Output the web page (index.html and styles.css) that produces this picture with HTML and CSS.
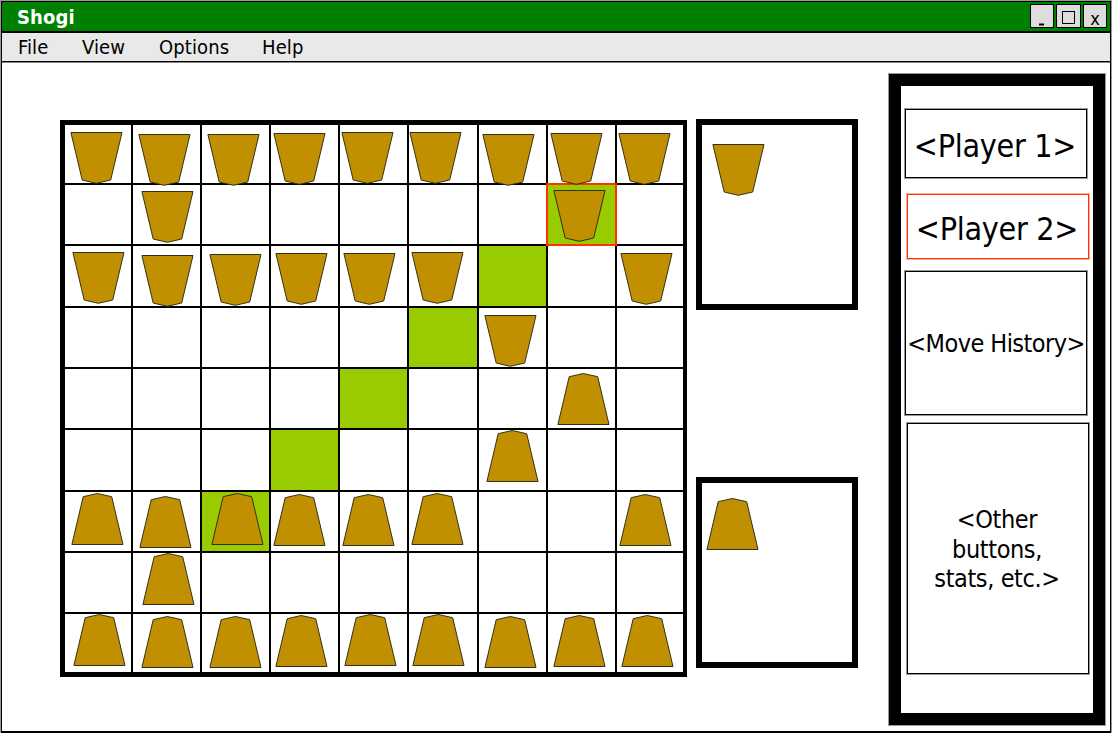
FILE: index.html
```
<!DOCTYPE html>
<html lang="en">
<head>
<meta charset="utf-8">
<title>Shogi</title>
<link rel="stylesheet" href="styles.css">
</head>
<body>
<div class="window">
  <header class="titlebar">
    <h1 class="title">Shogi</h1>
    <div class="controls">
      <button class="control"><svg width="22" height="22"><path d="M8 19.5h5" stroke="#000" stroke-width="2"/></svg></button>
      <button class="control wide"><svg width="23" height="22"><rect x="5.5" y="6.5" width="12" height="12" fill="none" stroke="#000"/></svg></button>
      <button class="control"><span class="close">x</span></button>
    </div>
  </header>
  <nav class="menu"><span>File</span><span>View</span><span>Options</span><span>Help</span></nav>
  <main class="content">
    <section class="board" id="board"></section>
    <section class="trays">
      <div class="tray gote-tray" id="tray-top"></div>
      <div class="tray sente-tray" id="tray-bottom"></div>
    </section>
    <aside class="sidebar">
      <div class="box player1">&lt;Player 1&gt;</div>
      <div class="box player2 shifted active">&lt;Player 2&gt;</div>
      <div class="box history">&lt;Move History&gt;</div>
      <div class="box other shifted">&lt;Other<br>buttons,<br>stats, etc.&gt;</div>
    </aside>
  </main>
</div>
<script src="board.js"></script>
</body>
</html>
```

FILE: board.js
```
// Each entry: row, column, facing, left inset, top inset within its square.
const pieces = [
  [0,0,'down',5,7],[0,1,'down',5,9],[0,2,'down',5,9],[0,3,'down',2,8],[0,4,'down',1,7],
  [0,5,'down',0,7],[0,6,'down',3,9],[0,7,'down',2,8],[0,8,'down',1,8],
  [1,1,'down',8,6],[1,7,'down',5,5],
  [2,0,'down',7,6],[2,1,'down',8,9],[2,2,'down',7,8],[2,3,'down',4,7],[2,4,'down',3,7],
  [2,5,'down',2,6],[2,8,'down',3,7],
  [3,6,'down',5,7],[4,7,'up',9,4],[5,6,'up',7,0],
  [6,0,'up',6,1],[6,1,'up',6,4],[6,2,'up',9,1],[6,3,'up',2,2],[6,4,'up',2,2],
  [6,5,'up',2,1],[6,8,'up',2,2],
  [7,1,'up',9,0],
  [8,0,'up',8,0],[8,1,'up',8,2],[8,2,'up',7,2],[8,3,'up',4,1],[8,4,'up',4,0],
  [8,5,'up',3,0],[8,6,'up',5,2],[8,7,'up',5,1],[8,8,'up',4,1]
];
const highlighted = ['1,7', '2,6', '3,5', '4,4', '5,3', '6,2'];
const outlines = {
  down: '0.9,0.5 52,0.5 40.7,48 26.3,51.3 12.2,48',
  up: '0.9,51.5 52,51.5 40.7,3.7 26.3,0.5 12.2,3.7'
};

function pieceMarkup(facing, left, top) {
  return `<svg class="piece" width="53" height="53" style="margin:${top}px 0 0 ${left}px"><polygon points="${outlines[facing]}"/></svg>`;
}

let squares = '';
for (let row = 0; row < 9; row++) {
  for (let col = 0; col < 9; col++) {
    const piece = pieces.find(p => p[0] === row && p[1] === col);
    const names = ['square'];
    if (highlighted.includes(`${row},${col}`)) names.push('path');
    if (row === 1 && col === 7) names.push('selected');
    squares += `<div class="${names.join(' ')}">${piece ? pieceMarkup(...piece.slice(2)) : ''}</div>`;
  }
}
document.getElementById('board').innerHTML = squares;
document.getElementById('tray-top').innerHTML = pieceMarkup('down', 10, 19);
document.getElementById('tray-bottom').innerHTML = pieceMarkup('up', 4, 15);
```

FILE: styles.css
```
* { box-sizing: border-box; }
body {
  margin: 0;
  background: #fff;
  color: #000;
  font-family: "DejaVu Sans Condensed", "DejaVu Sans", sans-serif;
  font-stretch: condensed;
}
.window {
  width: 1110px;
  height: 732px;
  margin: 1px 0 0 1px;
  border: 1px solid #000;
  border-bottom-width: 2px;
  box-shadow: 0 0 0 1px #999;
  overflow: hidden;
}
.titlebar {
  display: flex;
  justify-content: space-between;
  height: 31px;
  background: #008000;
  border-bottom: 2px solid #000;
}
.title {
  margin: 0;
  padding-left: 15px;
  font-size: 20px;
  line-height: 31px;
  letter-spacing: 0.1px;
  color: #fff;
}
.controls { display: flex; gap: 2px; padding: 2px 3px 0 0; }
.control {
  width: 24px;
  height: 24px;
  padding: 0;
  border: 1px solid #000;
  background: #ddd;
  font-family: inherit;
  display: flex;
  justify-content: center;
}
.control.wide { width: 25px; }
.close { font-size: 18px; line-height: 27px; }
.menu {
  display: grid;
  grid-template-columns: 64px 77px 103px 100px;
  height: 29px;
  padding-left: 16px;
  background: #e9e9e9;
  border-bottom: 1px solid #000;
  box-shadow: 0 1px #888;
  font-size: 20px;
  line-height: 28px;
  letter-spacing: 0.1px;
}
.content { display: flex; align-items: flex-start; }
.board {
  display: grid;
  grid-template-columns: 66px 67px 67px 67px 67px 68px 67px 67px 66px;
  grid-template-rows: 58px 59px 60px 59px 59px 60px 59px 59px 58px;
  gap: 2px;
  margin: 58px 0 0 58px;
  border: 5px solid #000;
  border-right-width: 4px;
  background: #000;
}
.square { background: #fff; min-width: 0; min-height: 0; }
.path { background: #9c0; }
.selected { box-shadow: 0 0 0 2px #f30; }
.piece { display: block; position: relative; }
.piece polygon { fill: #c09000; stroke: #33301a; stroke-width: 1; }
.trays { margin: 57px 0 0 9px; }
.tray { width: 162px; height: 191px; border: 6px solid #000; }
.sente-tray { margin-top: 167px; }
.sidebar {
  width: 216px;
  height: 651px;
  margin: 12px 0 0 31px;
  padding: 23px 0 0 4px;
  border: 12px solid #000;
  box-shadow: 0 0 0 1px #999;
}
.box {
  width: 182px;
  display: flex;
  align-items: center;
  justify-content: center;
  text-align: center;
  white-space: nowrap;
  border: 1px solid #000;
  box-shadow: 0 0 0 1px #999;
}
.shifted { margin-left: 2px; }
.player1, .player2 {
  font-size: 32px;
  line-height: 38px;
  letter-spacing: -0.3px;
  padding: 4px 2px 0 0;
}
.player1 { height: 69px; }
.player2 { height: 65px; margin-top: 16px; }
.active { border-color: #f30; box-shadow: 0 0 0 1px #ffb19c; }
.history { height: 144px; margin-top: 12px; font-size: 25px; letter-spacing: -0.55px; padding-top: 1px; }
.other { height: 251px; margin-top: 8px; font-size: 25px; line-height: 29.5px; letter-spacing: -0.4px; padding: 2px 2px 0 0; }
```
